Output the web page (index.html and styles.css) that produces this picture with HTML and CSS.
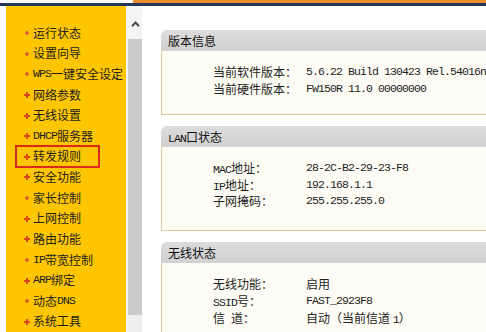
FILE: index.html
```html
<!DOCTYPE html>
<html lang="zh-CN">
<head>
<meta charset="utf-8">
<title>运行状态</title>
<link rel="stylesheet" href="styles.css">
</head>
<body>
<div class="topbar">
  <div class="tb-left"></div>
  <div class="tb-right"></div>
</div>
<div class="main">
  <nav class="sidebar">
    <ul class="menu">
      <li class="item"><span class="dot"></span>运行状态</li>
      <li class="item"><span class="dot"></span>设置向导</li>
      <li class="item"><span class="dot"></span><span class="en">WPS</span>一键安全设定</li>
      <li class="item"><span class="plus"></span>网络参数</li>
      <li class="item"><span class="plus"></span>无线设置</li>
      <li class="item"><span class="plus"></span><span class="en">DHCP</span>服务器</li>
      <li class="item active"><span class="plus"></span>转发规则</li>
      <li class="item"><span class="plus"></span>安全功能</li>
      <li class="item"><span class="dot"></span>家长控制</li>
      <li class="item"><span class="plus"></span>上网控制</li>
      <li class="item"><span class="plus"></span>路由功能</li>
      <li class="item"><span class="dot"></span><span class="en">IP</span>带宽控制</li>
      <li class="item"><span class="plus"></span><span class="en">ARP</span>绑定</li>
      <li class="item"><span class="dot"></span>动态<span class="en">DNS</span></li>
      <li class="item"><span class="plus"></span>系统工具</li>
    </ul>
  </nav>
  <div class="scroll">
    <div class="sb-up">
      <svg width="9" height="6" viewBox="0 0 9 6"><path d="M1 5.2 L4.5 1.5 L8 5.2" fill="none" stroke="#4a4a4a" stroke-width="2"/></svg>
    </div>
    <div class="sb-thumb"></div>
  </div>
  <div class="content">
    <section class="box">
      <h2 class="box-title">版本信息</h2>
      <div class="box-body">
        <div class="row"><span class="label">当前软件版本：</span><span class="value en">5.6.22 Build 130423 Rel.54016n</span></div>
        <div class="row"><span class="label">当前硬件版本：</span><span class="value en">FW150R 11.0 00000000</span></div>
      </div>
    </section>
    <section class="box">
      <h2 class="box-title"><span class="en">LAN</span>口状态</h2>
      <div class="box-body tall">
        <div class="row"><span class="label"><span class="en">MAC</span>地址：</span><span class="value en">28-2C-B2-29-23-F8</span></div>
        <div class="row"><span class="label"><span class="en">IP</span>地址：</span><span class="value en">192.168.1.1</span></div>
        <div class="row"><span class="label">子网掩码：</span><span class="value en">255.255.255.0</span></div>
      </div>
    </section>
    <section class="box">
      <h2 class="box-title">无线状态</h2>
      <div class="box-body">
        <div class="row"><span class="label">无线功能：</span><span class="value">启用</span></div>
        <div class="row"><span class="label"><span class="en">SSID</span>号：</span><span class="value en">FAST_2923F8</span></div>
        <div class="row"><span class="label">信&ensp;道：</span><span class="value">自动（当前信道 <span class="en">1</span>）</span></div>
      </div>
    </section>
  </div>
</div>
</body>
</html>
```
FILE: styles.css
```css
* { box-sizing: border-box; }
html, body { margin: 0; padding: 0; }
body {
  width: 486px;
  height: 332px;
  overflow: hidden;
  background: #fff;
  font-family: "Noto Sans CJK SC", sans-serif;
  font-size: 12px;
  color: #1e1e1e;
}
.en {
  font-family: "Liberation Mono", monospace;
  font-size: 11.5px;
  letter-spacing: -0.9px;
}
.topbar {
  display: flex;
  height: 6px;
}
.tb-left {
  width: 133px;
  border-top: 3px solid #fafafa;
  border-bottom: 3px solid #24375a;
}
.tb-right {
  flex: 1;
  border-top: 3px solid #e88c2c;
  border-bottom: 3px solid #24375a;
}
.main {
  display: flex;
  height: 326px;
  padding-left: 6px;
}
.sidebar {
  width: 120px;
  background: #fdc600;
  padding-top: 16.7px;
}
.menu {
  list-style: none;
  margin: 0;
  padding: 0;
}
.item {
  display: flex;
  align-items: center;
  margin-left: 10px;
  width: 83px;
  height: 20.64px;
  line-height: 20.64px;
  padding-left: 8px;
  white-space: nowrap;
}
.item.active {
  outline: 2px solid #dc2a1e;
  outline-offset: -1px;
}
.dot, .plus {
  flex: none;
  width: 6px;
  height: 6px;
  margin-right: 3px;
}
.dot {
  background: radial-gradient(circle, #e0642a 0 1.6px, transparent 1.9px);
}
.plus {
  background:
    linear-gradient(#d8481c, #d8481c) center / 6px 2px no-repeat,
    linear-gradient(#d8481c, #d8481c) center / 2px 6px no-repeat;
}
.scroll {
  width: 16px;
  border-left: 2px solid #f6f6f6;
  background: #efefef;
  display: flex;
  flex-direction: column;
}
.sb-up {
  height: 33px;
  background: #f5f5f5;
  display: flex;
  justify-content: center;
  padding-top: 15px;
}
.sb-thumb {
  height: 276px;
  background: #cacaca;
}
.content {
  flex: 1;
  overflow: hidden;
  padding-top: 24px;
  padding-left: 19px;
}
.box {
  margin-bottom: 11px;
}
.box-title {
  margin: 0;
  height: 21px;
  line-height: 21px;
  padding-left: 7px;
  font-size: 12px;
  font-weight: normal;
  color: #111;
  background: linear-gradient(#dcdcdc, #d1d1d1);
  border-radius: 6px 0 0 0;
}
.box-body {
  background: #fcfbf4;
  border-left: 1px solid #d8c9a2;
  border-bottom: 1px solid #d8c9a2;
  padding: 12px 0 17px 51px;
}
.box-body.tall {
  padding-top: 13px;
  padding-bottom: 20px;
}
.box-body.tall .row {
  height: 16.5px;
  line-height: 16.5px;
}
.row {
  display: flex;
  height: 17px;
  line-height: 17px;
  white-space: nowrap;
}
.label {
  width: 93px;
  flex: none;
}
.value {
  color: #1e1e1e;
}
```
